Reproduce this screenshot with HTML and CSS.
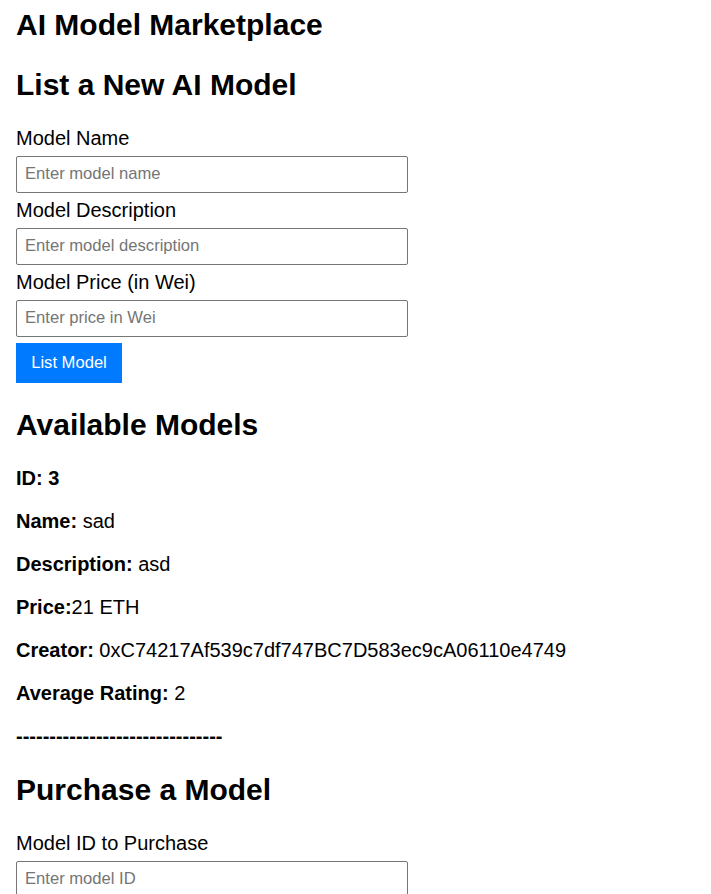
FILE: index.html
```html
<!DOCTYPE html>
<html lang="en">
<head>
<meta charset="utf-8">
<title>AI Model Marketplace</title>
<link rel="stylesheet" href="styles.css">
</head>
<body>
<h1 class="title">AI Model Marketplace</h1>

<section class="section">
  <h2 class="heading">List a New AI Model</h2>
  <div class="form">
    <label class="label" for="name">Model Name</label>
    <input class="field" id="name" type="text" placeholder="Enter model name">
    <label class="label" for="desc">Model Description</label>
    <input class="field" id="desc" type="text" placeholder="Enter model description">
    <label class="label" for="price">Model Price (in Wei)</label>
    <input class="field" id="price" type="text" placeholder="Enter price in Wei">
    <button class="btn" type="button">List Model</button>
  </div>
</section>

<section class="section">
  <h2 class="heading">Available Models</h2>
  <div class="model">
    <p class="row"><strong>ID: 3</strong></p>
    <p class="row"><strong>Name:</strong> sad</p>
    <p class="row"><strong>Description:</strong> asd</p>
    <p class="row"><strong>Price:</strong>21 ETH</p>
    <p class="row"><strong>Creator:</strong> 0xC74217Af539c7df747BC7D583ec9cA06110e4749</p>
    <p class="row"><strong>Average Rating:</strong> 2</p>
    <p class="row divider">-------------------------------</p>
  </div>
</section>

<section class="section">
  <h2 class="heading">Purchase a Model</h2>
  <div class="form">
    <label class="label" for="pid">Model ID to Purchase</label>
    <input class="field" id="pid" type="text" placeholder="Enter model ID">
  </div>
</section>
</body>
</html>
```

FILE: styles.css
```css
html, body {
  background: #ffffff;
}

body {
  margin: 0;
  padding: 8px 16px 0;
  font-family: "Liberation Sans", Arial, sans-serif;
  color: #000000;
}

.title {
  margin: 0 0 25.5px;
  font-size: 30px;
  font-weight: bold;
}

.heading {
  margin: 25px 0;
  font-size: 30px;
  font-weight: bold;
}

.form {
  display: flex;
  flex-direction: column;
  align-items: flex-start;
}

.label {
  display: block;
  font-size: 20px;
  line-height: 23px;
}

.field {
  box-sizing: border-box;
  width: 392px;
  height: 37px;
  margin: 6px 0;
  padding: 0 8px;
  border: 1px solid #767676;
  border-radius: 2px;
  font-family: "Liberation Sans", Arial, sans-serif;
  font-size: 16.6px;
  color: #000000;
  background: #ffffff;
}

.field::placeholder {
  color: #757575;
}

.btn {
  box-sizing: border-box;
  width: 106px;
  height: 40px;
  padding: 0 15px;
  border: none;
  border-radius: 0;
  background: #007bff;
  color: #ffffff;
  font-family: "Liberation Sans", Arial, sans-serif;
  font-size: 16.6px;
  cursor: pointer;
}

.row {
  margin: 20px 0;
  font-size: 20px;
  line-height: 23px;
}

.divider {
  font-weight: bold;
}
```
